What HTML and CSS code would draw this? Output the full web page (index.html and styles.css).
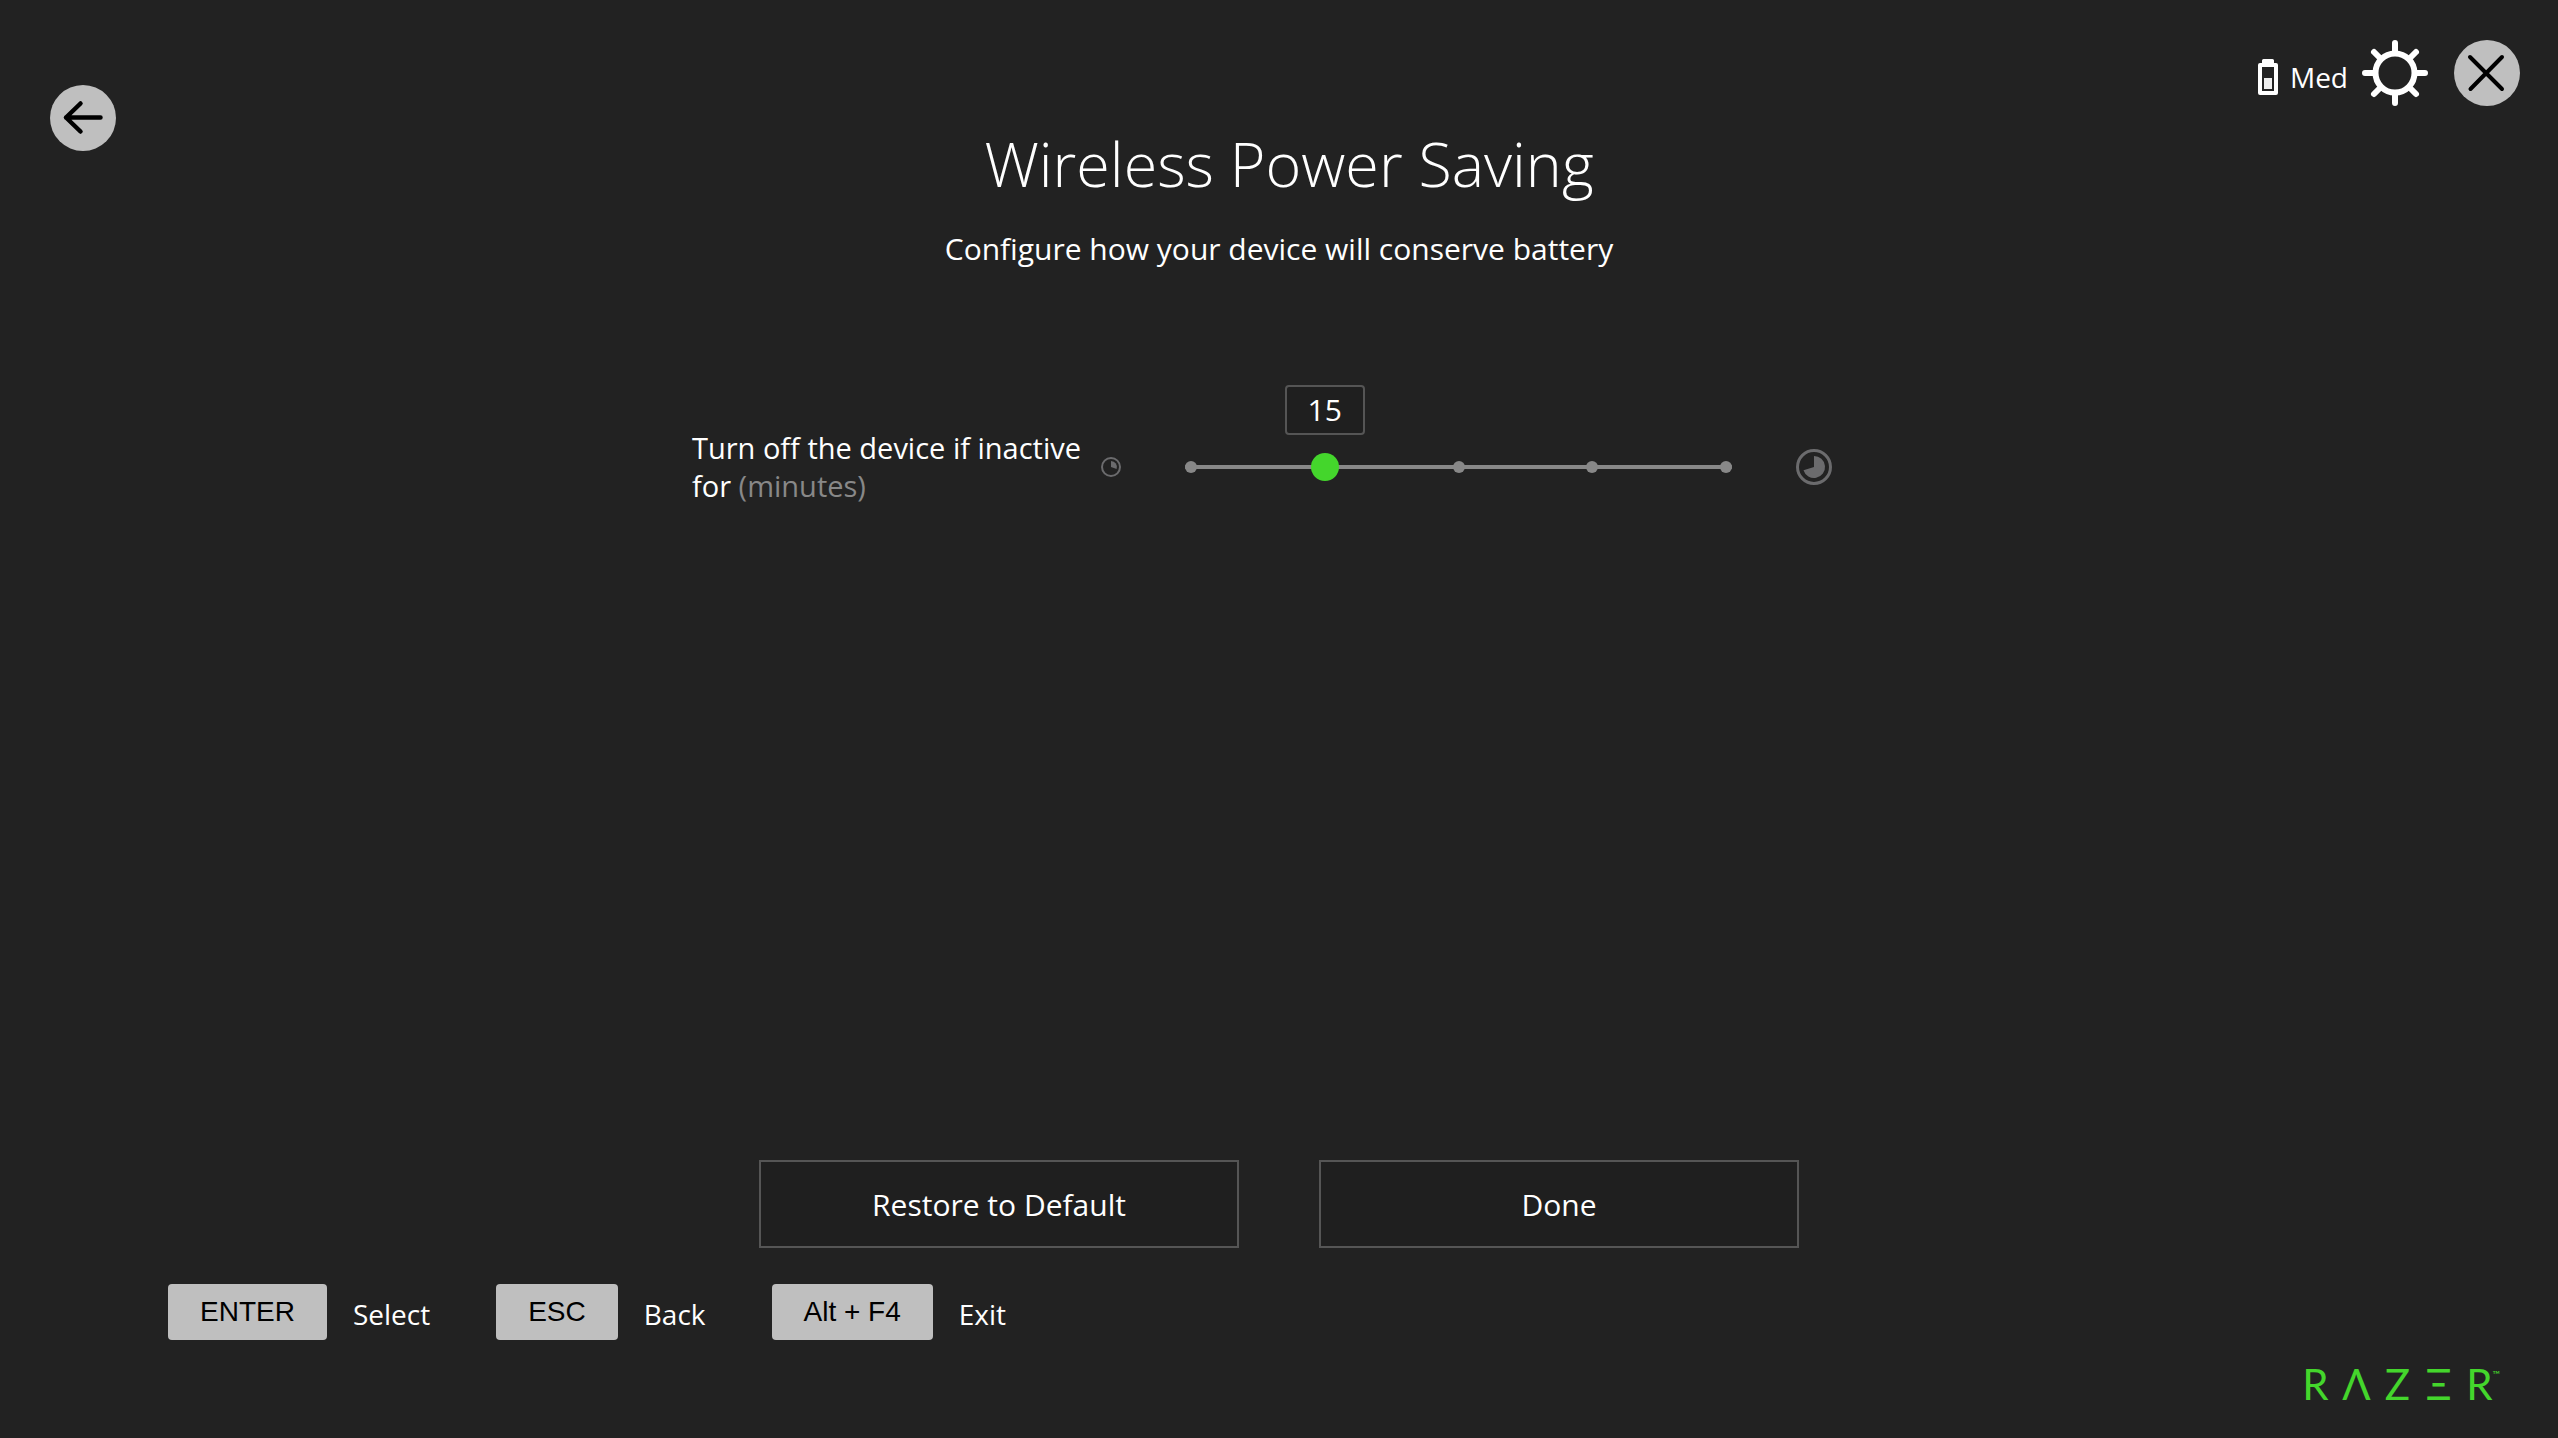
FILE: index.html
```html
<!DOCTYPE html>
<html lang="en">
<head>
    <meta charset="UTF-8">
    <meta name="viewport" content="width=device-width, initial-scale=1.0">
    <title>Wireless Power Saving</title>
    <link rel="stylesheet" href="styles.css">
</head>
<body>
    <header class="header">
        <button type="button" class="icon-btn back" aria-label="Back">
            <svg viewBox="0 0 66 66">
                <circle cx="33" cy="33" r="33" fill="#bfbfbf"/>
                <path d="M50.500 32.500H16M30.500 18.500L16 32.500l14.500 14" fill="none" stroke="#000" stroke-width="4.500" stroke-linecap="round" stroke-linejoin="round"/>
            </svg>
        </button>

        <div class="heading">
            <h1>Wireless Power Saving</h1>
            <p>Configure how your device will conserve battery</p>
        </div>

        <div class="status">
            <div class="battery">
                <svg viewBox="0 0 20 36">
                    <path d="M4 4V1.500Q4 0 5.500 0h9Q16 0 16 1.500V4h2q2 0 2 2v28q0 2-2 2H2q-2 0-2-2V6q0-2 2-2zM4 8v24h12V8z" fill="#fff" fill-rule="evenodd"/>
                    <rect x="6" y="19" width="8" height="11" fill="#eee"/>
                </svg>
                <span>Med</span>
            </div>
            <button type="button" class="icon-btn" aria-label="Settings">
                <svg viewBox="0 0 66 66" fill="none" stroke="#fff" stroke-width="6" stroke-linecap="round">
                    <circle cx="33" cy="33" r="19.500"/>
                    <path d="M33 3v9M33 54v9M3 33h9M54 33h9M12 12l6 6M48 48l6 6M54 12l-6 6M18 48l-6 6"/>
                </svg>
            </button>
            <button type="button" class="icon-btn" aria-label="Close">
                <svg viewBox="0 0 66 66">
                    <circle cx="33" cy="33" r="33" fill="#bfbfbf"/>
                    <path d="M16 17l32 32M48 17L16.500 49" fill="none" stroke="#000" stroke-width="4" stroke-linecap="round"/>
                </svg>
            </button>
        </div>
    </header>

    <main class="content">
        <div class="setting">
            <label for="timeout">Turn off the device if inactive for <span class="unit">(minutes)</span></label>
            <svg class="clock-small" viewBox="0 0 20 20">
                <circle cx="10" cy="10" r="9" fill="none" stroke="#6b6b6d" stroke-width="2"/>
                <path d="M10 10V4a6 6 0 0 1 5.600 8z" fill="#6b6b6d"/>
            </svg>
            <div class="slider">
                <output class="bubble" for="timeout">15</output>
                <div class="track">
                    <span class="stop"></span>
                    <span class="stop"></span>
                    <span class="stop"></span>
                    <span class="stop"></span>
                    <span class="stop"></span>
                </div>
                <input type="range" id="timeout" min="5" max="45" step="10" value="15">
            </div>
            <svg class="clock-large" viewBox="0 0 36 36">
                <circle cx="18" cy="18" r="16.500" fill="none" stroke="#6b6b6d" stroke-width="3"/>
                <path d="M18 18V7a11 11 0 1 1-10.500 14.200z" fill="#6b6b6d"/>
            </svg>
        </div>
    </main>

    <div class="actions">
        <button type="button">Restore to Default</button>
        <button type="button">Done</button>
    </div>

    <footer class="footer">
        <div class="shortcuts">
            <kbd>ENTER</kbd><span>Select</span>
            <kbd>ESC</kbd><span>Back</span>
            <kbd>Alt + F4</kbd><span>Exit</span>
        </div>
        <div class="logo" role="img" aria-label="Razer">
            <span>R</span><span>Λ</span><span>Z</span><span>Ξ</span><span>R</span><small>™</small>
        </div>
    </footer>
</body>
</html>
```
FILE: styles.css
```css
* {
    box-sizing: border-box;
}
body {
    margin: 0;
    min-height: 100vh;
    display: flex;
    flex-direction: column;
    background-color: #222;
    color: #fff;
    font-family: "Open Sans", "Noto Sans", sans-serif;
    font-size: 30px;
    line-height: 38px;
}
button {
    font: inherit;
    color: inherit;
    cursor: pointer;
}
svg {
    display: block;
    flex: none;
}

/* header */
.header {
    display: grid;
    grid-template-columns: 1fr auto 1fr;
    align-items: start;
    padding: 40px 38px 0;
}
.icon-btn {
    width: 66px;
    height: 66px;
    padding: 0;
    border: none;
    border-radius: 50%;
    background: none;
}
.back {
    margin: 45px 0 0 12px;
}
.heading {
    padding-top: 80px;
    text-align: center;
}
.heading h1 {
    margin: 0;
    padding-left: 20px;
    font-size: 61px;
    font-weight: 300;
    line-height: 88px;
}
.heading p {
    margin: 22px 0 0;
}
.status {
    display: flex;
    justify-content: flex-end;
}
.status .icon-btn + .icon-btn {
    margin-left: 26px;
}
.battery {
    display: flex;
    align-items: center;
    gap: 12px;
    height: 74px;
    margin-right: 14px;
    font-size: 28px;
}
.battery svg {
    width: 20px;
    height: 36px;
}

/* slider row */
.content {
    flex: 1;
    padding-top: 161px;
}
.setting {
    display: flex;
    align-items: center;
    width: 1174px;
    max-width: 100%;
    margin: 0 auto;
    padding-right: 34px;
}
.setting label {
    width: 409px;
    font-size: 29px;
}
.unit {
    color: #888;
}
.clock-small {
    width: 20px;
    height: 20px;
}
.clock-large {
    width: 36px;
    height: 36px;
}
.slider {
    position: relative;
    flex: 1;
    margin: 0 64px;
}
.track {
    display: flex;
    justify-content: space-between;
    background: linear-gradient(#888, #888) center / 100% 4px no-repeat;
    border-radius: 6px;
}
.stop {
    width: 12px;
    height: 12px;
    border-radius: 50%;
    background-color: #888;
}
.slider input {
    position: absolute;
    top: -8px;
    left: -8px;
    width: calc(100% + 16px);
    height: 28px;
    margin: 0;
    background: none;
    appearance: none;
    -webkit-appearance: none;
}
.slider input::-webkit-slider-thumb {
    -webkit-appearance: none;
    width: 28px;
    height: 28px;
    border-radius: 50%;
    background-color: #44d62c;
}
.bubble {
    position: absolute;
    left: 25%;
    bottom: 38px;
    width: 80px;
    margin-left: -37px;
    border: 2px solid #555;
    border-radius: 4px;
    background-color: #1f1f1f;
    line-height: 46px;
    text-align: center;
}

/* bottom */
.actions {
    display: flex;
    justify-content: center;
    gap: 80px;
}
.actions button {
    width: 480px;
    height: 88px;
    padding: 2px 0 0;
    border: 2px solid #555;
    background-color: #1f1f1f;
}
.footer {
    display: flex;
    justify-content: space-between;
    align-items: flex-end;
    padding: 36px 58px 28px 168px;
}
.shortcuts {
    display: flex;
    align-items: center;
    margin-bottom: 70px;
    font-size: 28px;
}
.shortcuts kbd {
    padding: 0 32px;
    border-radius: 4px;
    background-color: #bfbfbf;
    color: #000;
    font-family: "Liberation Sans", Arial, sans-serif;
    line-height: 56px;
}
.shortcuts span {
    margin: 4px 66px 0 26px;
}
.logo {
    position: relative;
    display: grid;
    grid-template-columns: repeat(5, 41px);
    color: #44d62c;
    font-family: Lato, "Open Sans", sans-serif;
    font-size: 42px;
    line-height: 52px;
    text-align: center;
}
.logo small {
    position: absolute;
    top: 4px;
    right: 0;
    font-size: 10px;
    line-height: 24px;
}
```
